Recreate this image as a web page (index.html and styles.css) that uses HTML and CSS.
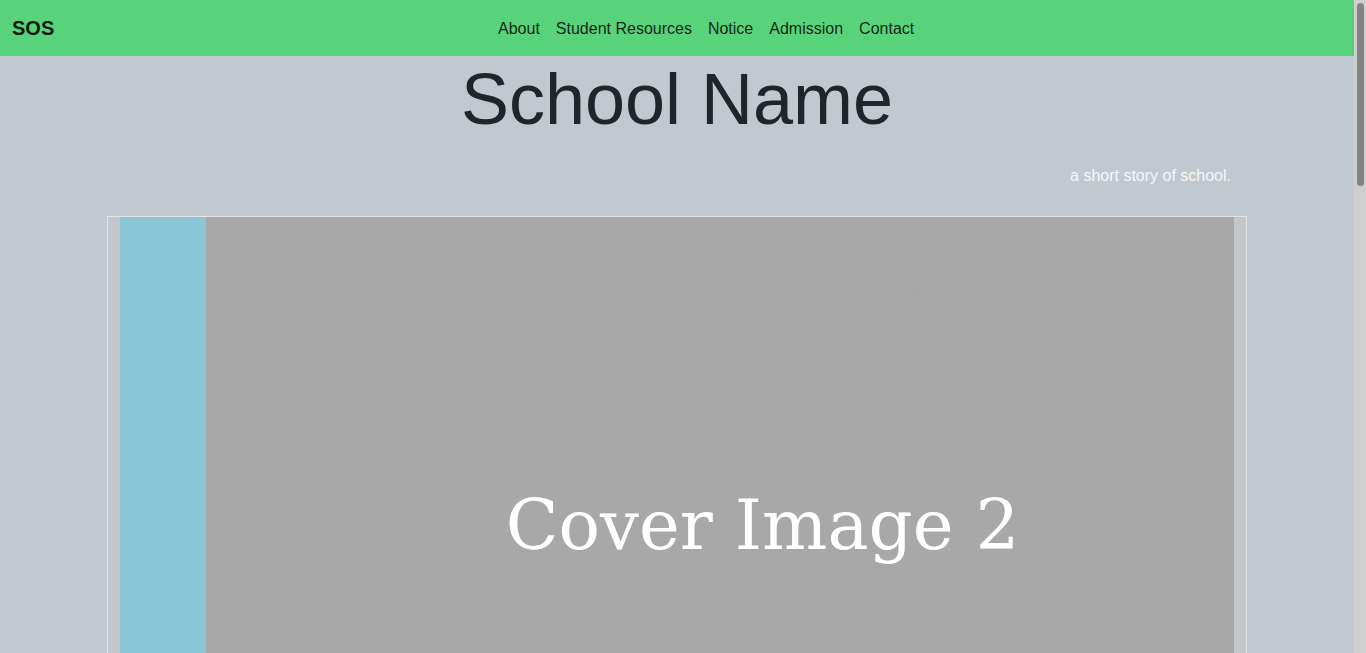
FILE: index.html
```html
<!DOCTYPE html>
<html lang="en">
<head>
<meta charset="utf-8">
<title>SOS - School Name</title>
<link rel="stylesheet" href="styles.css">
</head>
<body>
<div class="page">
<nav class="navbar">
  <a class="brand" href="#">SOS</a>
  <ul class="nav">
    <li><a href="#">About</a></li>
    <li><a href="#">Student Resources</a></li>
    <li><a href="#">Notice</a></li>
    <li><a href="#">Admission</a></li>
    <li><a href="#">Contact</a></li>
  </ul>
</nav>
<header class="hero">
  <h1 class="title">School Name</h1>
  <div class="container">
    <p class="tagline">a short story of school.</p>
  </div>
</header>
<main class="container">
  <div class="carousel">
    <div class="slide-prev"></div>
    <div class="slide-current">
      <span class="ghost">Take a New Screenshot</span>
      <span class="cover-text">Cover Image 2</span>
    </div>
  </div>
  <section class="more"></section>
</main>
</div>
<div class="scrollbar" aria-hidden="true"><div class="thumb"></div></div>
</body>
</html>
```
FILE: styles.css
```css
body {
  margin: 0;
  display: flex;
  align-items: flex-start;
  background: #c1c8cf;
  font-family: "Liberation Sans", Arial, sans-serif;
  font-size: 16px;
  line-height: 1.5;
  color: #212529;
}
.page {
  flex: 1;
  min-width: 0;
}
.scrollbar {
  position: sticky;
  top: 0;
  flex: none;
  width: 12px;
  height: 100vh;
  background: #cfcfcf;
  padding: 3px 2px 0 3px;
  box-sizing: border-box;
}
.thumb {
  height: 183px;
  background: #7f8384;
  border-radius: 4px;
}
.navbar {
  display: flex;
  align-items: center;
  height: 56px;
  padding: 0 12px;
  background: #58d27b;
  box-sizing: border-box;
}
.brand {
  font-size: 20px;
  font-weight: bold;
  line-height: 30px;
  color: rgba(0, 0, 0, 0.9);
  text-decoration: none;
  margin-right: 16px;
}
.nav {
  display: flex;
  list-style: none;
  margin: 0 auto;
  padding: 0;
}
.nav a {
  display: block;
  padding: 9px 8px 7px;
  line-height: 24px;
  color: rgba(0, 0, 0, 0.85);
  text-decoration: none;
}
.title {
  margin: 0;
  font-size: 72px;
  font-weight: 400;
  line-height: 1.2;
  text-align: center;
  color: #212529;
}
.container {
  width: 1140px;
  margin: 0 auto;
  box-sizing: border-box;
}
.tagline {
  margin: 22px 0 28px;
  padding-right: 16px;
  text-align: right;
  color: #f6f7f8;
  line-height: 24px;
}
.carousel {
  display: flex;
  border: 1px solid #e2e5e8;
  border-bottom: 0;
  padding: 0 12px;
  background: #c3c7cb;
}
.slide-prev {
  width: 86px;
  flex: none;
  background: #8ac6d5;
}
.slide-current {
  flex: 1;
  position: relative;
  height: 622px;
  background: #a8a8a8;
  display: flex;
  justify-content: center;
  padding: 273px 0 0 85px;
  box-sizing: border-box;
}
.ghost {
  position: absolute;
  left: 654px;
  top: 63px;
  padding: 3px 4px;
  background: #a9a9a9;
  color: #a6a7a6;
  font-size: 14.5px;
  line-height: 20px;
}
.cover-text {
  font-family: "DejaVu Serif", serif;
  font-size: 69px;
  line-height: 70px;
  color: #ffffff;
  white-space: nowrap;
}
.more {
  height: 1440px;
}
```
